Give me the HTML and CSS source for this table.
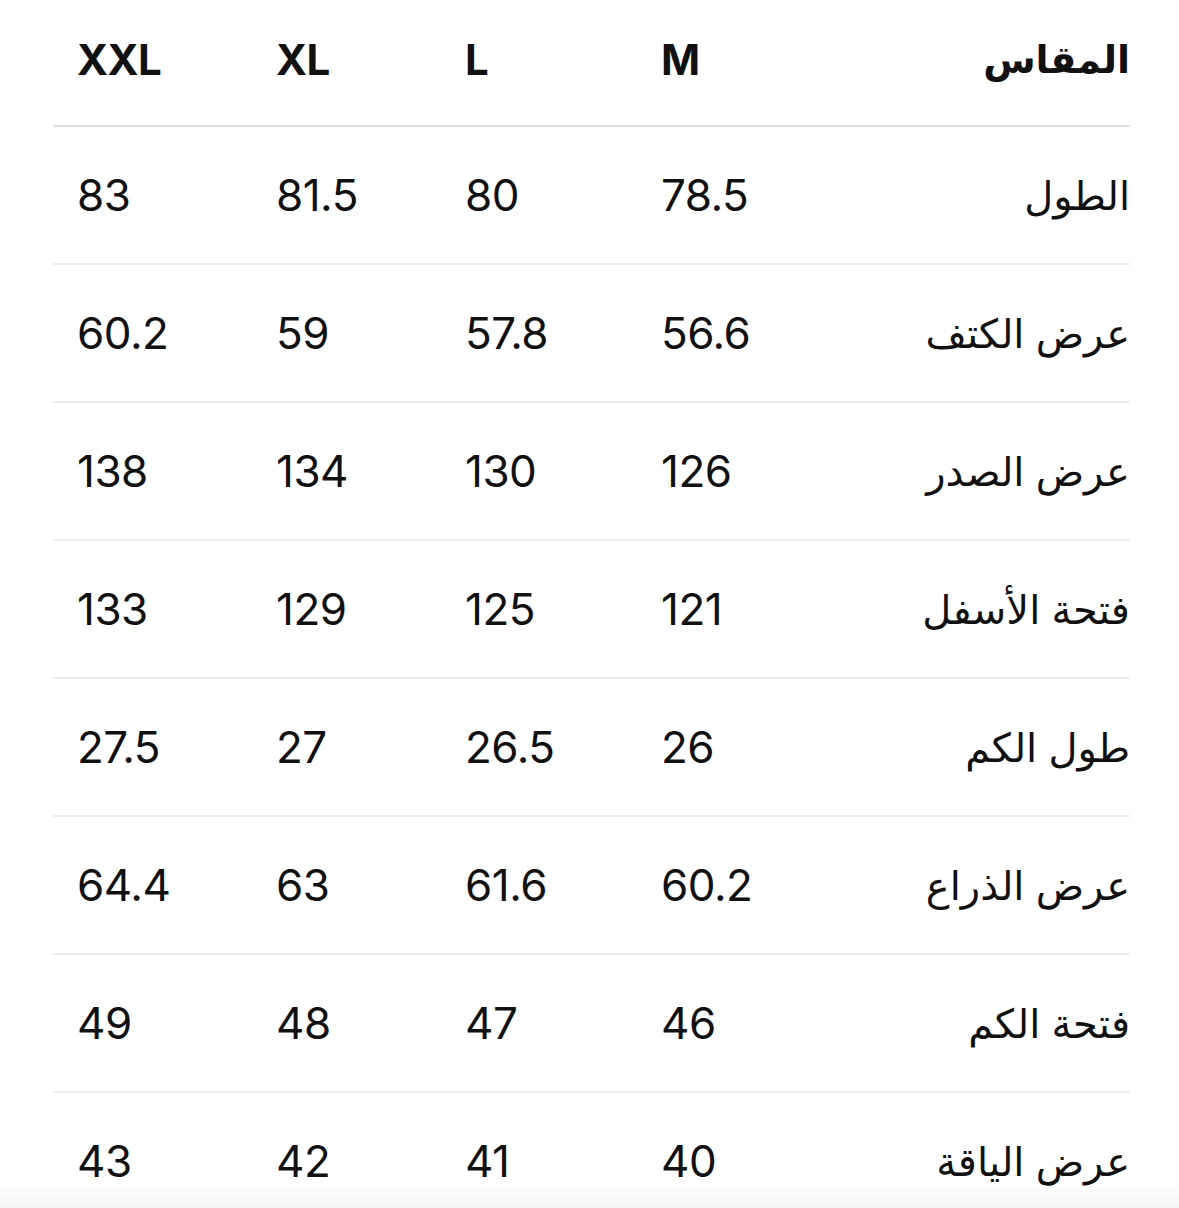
FILE: index.html
```html
<!DOCTYPE html>
<html lang="ar">
<head>
<meta charset="utf-8">
<link rel="stylesheet" href="styles.css">
</head>
<body>
<div class="page">
  <div class="table">
    <div class="row head">
      <div class="c">XXL</div><div class="c">XL</div><div class="c">L</div><div class="c">M</div><div class="lab" dir="rtl">المقاس</div>
    </div>
    <div class="row"><div class="c">83</div><div class="c">81.5</div><div class="c">80</div><div class="c">78.5</div><div class="lab" dir="rtl">الطول</div></div>
    <div class="row"><div class="c">60.2</div><div class="c">59</div><div class="c">57.8</div><div class="c">56.6</div><div class="lab" dir="rtl">عرض الكتف</div></div>
    <div class="row"><div class="c">138</div><div class="c">134</div><div class="c">130</div><div class="c">126</div><div class="lab" dir="rtl">عرض الصدر</div></div>
    <div class="row"><div class="c">133</div><div class="c">129</div><div class="c">125</div><div class="c">121</div><div class="lab" dir="rtl">فتحة الأسفل</div></div>
    <div class="row"><div class="c">27.5</div><div class="c">27</div><div class="c">26.5</div><div class="c">26</div><div class="lab" dir="rtl">طول الكم</div></div>
    <div class="row"><div class="c">64.4</div><div class="c">63</div><div class="c">61.6</div><div class="c">60.2</div><div class="lab" dir="rtl">عرض الذراع</div></div>
    <div class="row"><div class="c">49</div><div class="c">48</div><div class="c">47</div><div class="c">46</div><div class="lab" dir="rtl">فتحة الكم</div></div>
    <div class="row last"><div class="c">43</div><div class="c">42</div><div class="c">41</div><div class="c">40</div><div class="lab" dir="rtl">عرض الياقة</div></div>
  </div>
</div>
</body>
</html>
```

FILE: styles.css
```css
html, body {
  margin: 0;
  padding: 0;
  background: #ffffff;
}
.page {
  height: 1208px;
  overflow: hidden;
  background: linear-gradient(to bottom, #ffffff 0, #ffffff 1180px, #f4f4f4 1208px);
  font-family: Inter, "DejaVu Sans", sans-serif;
  color: #111111;
}
.table {
  margin-left: 53px;
  padding-top: 1px;
  width: 1077px;
}
.row {
  display: grid;
  grid-template-columns: 199px 189px 196px 200px 1fr;
  align-items: center;
  padding-left: 24px;
  height: 136px;
  border-bottom: 2px solid #ececec;
  font-size: 44px;
  font-weight: 400;
}
.row.head {
  height: 116px;
  padding-bottom: 8px;
  border-bottom-color: #dedede;
  font-weight: 700;
  font-size: 42px;
}
.row.last {
  border-bottom: none;
}
.c {
  text-align: left;
  letter-spacing: -0.5px;
}
.lab {
  text-align: right;
  font-size: 40px;
}
.head .lab {
  font-size: 38px;
}
```
